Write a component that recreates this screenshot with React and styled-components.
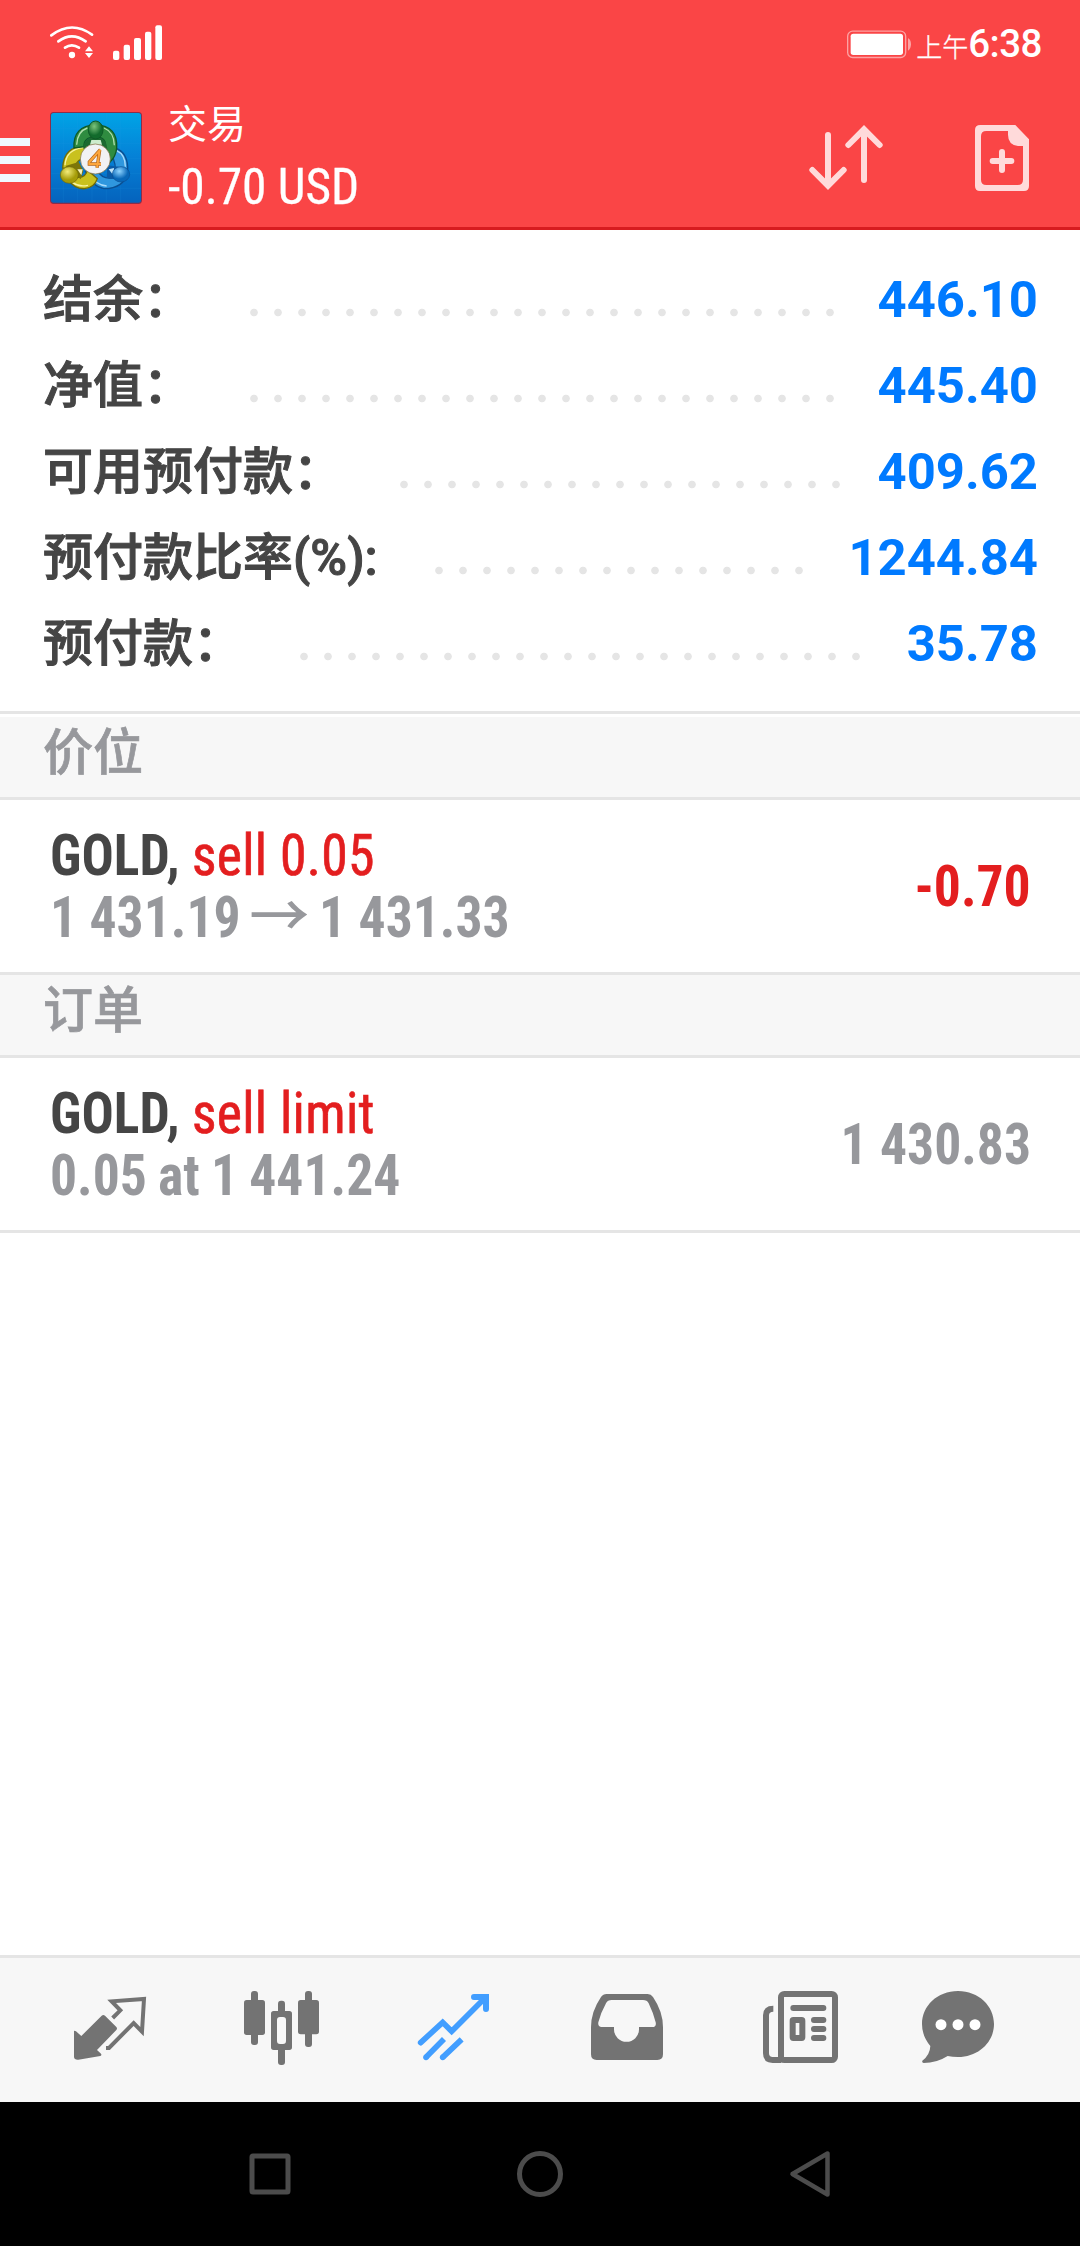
import React from 'react';
import styled, { createGlobalStyle } from 'styled-components';

const GlobalStyle = createGlobalStyle`
  * {
    box-sizing: border-box;
  }
  body {
    margin: 0;
    background: #fff;
    font-family: Roboto, 'Noto Sans CJK SC', sans-serif;
  }
  svg {
    display: block;
  }
`

const Screen = styled.div`
  display: flex;
  flex-direction: column;
  width: 1080px;
  height: 2246px;
`

const StatusBar = styled.div`
  display: flex;
  justify-content: space-between;
  height: 80px;
  padding: 0 38px 0 50px;
  background: #fa4546;
  color: #fff;
`
const StatusGroup = styled.div`
  display: flex;
`
const ClockPrefix = styled.span`
  margin-left: 5px;
  padding-top: 25px;
  font-size: 26px;
  font-weight: 300;
  line-height: 46px;
  -webkit-text-stroke: 0.3px #fff;
`
const Clock = styled.span`
  padding-top: 20px;
  font-size: 38.5px;
  font-weight: 500;
  letter-spacing: -0.5px;
  line-height: 48px;
`

const Header = styled.header`
  display: flex;
  height: 150px;
  background: #fa4546;
  border-bottom: 3px solid #d71b1f;
  color: #fff;
`
const MenuButton = styled.div`
  display: flex;
  flex-direction: column;
  gap: 10px;
  width: 30px;
  margin: 58px 20px 0 0;
`
const MenuLine = styled.span`
  height: 8px;
  background: #f0f8ff;
`
const AppLogo = styled.div`
  width: 92px;
  height: 92px;
  margin: 32px 26px 0 0;
`
const HeaderText = styled.div`
  flex: 1;
  padding-top: 20px;
`
const Title = styled.div`
  font-size: 39px;
  line-height: 51px;
`
const Profit = styled.div`
  font-family: 'Roboto Condensed', Roboto, sans-serif;
  font-size: 50.5px;
  line-height: 71px;
  transform: scaleX(0.978);
  transform-origin: left;
  -webkit-text-stroke: 0.3px #fff;
`
const Actions = styled.div`
  display: flex;
  gap: 92px;
  padding: 45px 51px 0 0;
`

const Summary = styled.section`
  padding: 27px 42px 24px 43px;
  border-bottom: 3px solid #e5e5e5;
`
const SummaryRow = styled.div`
  display: flex;
  height: 86px;
  line-height: 86px;
`
const Label = styled.span`
  font-size: 50px;
  font-weight: 500;
  color: #454545;
  -webkit-text-stroke: 1px #454545;
`
const Leader = styled.span`
  width: ${(p) => p.$dots * 24}px;
  margin-left: 49px;
  background: radial-gradient(circle at 12px 55.5px, #e5e5e5 3.4px, transparent 4.2px) repeat-x 0 0 / 24px 86px;
`
const Amount = styled.span`
  margin-left: auto;
  color: #007aff;
  font-size: 50.8px;
  font-weight: 700;
`

const SectionHead = styled.div`
  height: 83px;
  margin-top: ${(p) => (p.$spaced ? '3px' : 0)};
  padding-left: 43px;
  background: #f7f7f7;
  border-bottom: 3px solid #e5e5e5;
  color: #97989c;
  font-size: 50px;
  font-weight: 500;
  line-height: 73px;
  -webkit-text-stroke: 0.7px #97989c;
`
const Order = styled.div`
  display: flex;
  justify-content: space-between;
  height: 175px;
  padding: 24px 49px 0 50px;
  border-bottom: 3px solid #e5e5e5;
  color: #97989c;
  font-family: 'Roboto Condensed', Roboto, 'Noto Sans CJK SC', sans-serif;
  font-size: 58px;
  font-weight: 700;
  line-height: 62px;
  white-space: nowrap;
`
const OrderInfo = styled.div`
  transform: scaleX(0.925);
  transform-origin: left;
`
const Symbol = styled.span`
  color: #454545;
`
const Action = styled.span`
  color: #e31e1f;
  font-weight: 400;
  letter-spacing: 0.3px;
  -webkit-text-stroke: 0.7px #e31e1f;
`
const Price = styled.div`
  word-spacing: ${(p) => (p.$tight ? '-1.3px' : 0)};
`
const Arrow = styled.span`
  display: inline-block;
  font-weight: 500;
  transform: scaleX(1.12);
`
const OrderValue = styled.div`
  line-height: 124px;
  transform: scaleX(0.925);
  transform-origin: right;
  color: ${(p) => (p.$loss ? '#e31e1f' : '#97989c')};
`
const Content = styled.main`
  flex: 1;
`

const TabBar = styled.nav`
  display: grid;
  grid-template-columns: 171px 173px 173px 173px 158px 80px;
  align-items: center;
  height: 147px;
  padding-left: 70px;
  background: #f7f7f7;
  border-top: 3px solid #e5e5e5;
`
const Tab = styled.div`
  color: ${(p) => (p.$active ? '#429eff' : '#737373')};
`
const SystemBar = styled.div`
  display: flex;
  justify-content: space-between;
  align-items: center;
  height: 144px;
  padding: 0 240px;
  background: #000;
`

const summary = [
  { label: '结余：', value: '446.10', dots: 25 },
  { label: '净值：', value: '445.40', dots: 25 },
  { label: '可用预付款：', value: '409.62', dots: 19 },
  { label: '预付款比率(%):', value: '1244.84', dots: 16 },
  { label: '预付款：', value: '35.78', dots: 24 },
]

function WifiIcon() {
  return (
    <svg width="48" height="80" viewBox="150 0 144 240" fill="none" stroke="#fff" strokeWidth="8" strokeLinecap="round">
      <path d="M154 106Q215 60 276 104" />
      <path d="M175 124Q215 94 257 124" />
      <path d="M195 143Q215 129 237 143" />
      <circle cx="216" cy="165" r="9.5" fill="#fff" stroke="none" />
      <path d="M267 139l12 15h-24zM267 174l12-15h-24z" fill="#fff" stroke="none" />
    </svg>
  )
}

function SignalIcon() {
  return (
    <svg width="66" height="80" viewBox="294 0 198 240" fill="#fff">
      <rect x="339" y="152" width="19" height="28" rx="6" />
      <rect x="371" y="134" width="19" height="46" rx="6" />
      <rect x="402" y="114" width="21" height="66" rx="6" />
      <rect x="435" y="95" width="19" height="85" rx="6" />
      <rect x="466" y="76" width="20" height="104" rx="6" />
    </svg>
  )
}

function BatteryIcon() {
  return (
    <svg width="64" height="80" viewBox="201 0 192 240">
      <rect x="203" y="93.5" width="174" height="79" rx="15" fill="none" stroke="#fda2a3" strokeWidth="4" />
      <rect x="212" y="101" width="157" height="64" rx="8" fill="#fff" />
      <path d="M384 114q9 6 9 19t-9 19z" fill="#fda2a3" />
    </svg>
  )
}

function LogoIcon() {
  return (
    <svg width="92" height="92" viewBox="150 336 276 276">
      <defs>
        <linearGradient id="sky" x1="0" y1="0" x2="0" y2="1">
          <stop offset="0" stopColor="#00a4e6" />
          <stop offset="0.5" stopColor="#0580d6" />
          <stop offset="1" stopColor="#0563bd" />
        </linearGradient>
        <radialGradient id="greenHead" cx="0.4" cy="0.3">
          <stop offset="0" stopColor="#7cc47c" />
          <stop offset="1" stopColor="#126b2c" />
        </radialGradient>
        <radialGradient id="yellowHead" cx="0.4" cy="0.3">
          <stop offset="0" stopColor="#f3ec7a" />
          <stop offset="1" stopColor="#a59c08" />
        </radialGradient>
        <radialGradient id="blueHead" cx="0.4" cy="0.3">
          <stop offset="0" stopColor="#8fd4ff" />
          <stop offset="1" stopColor="#0867b8" />
        </radialGradient>
      </defs>
      <rect x="150" y="336" width="276" height="276" rx="11" fill="#8b2d4a" />
      <rect x="153" y="339" width="270" height="269" rx="8" fill="url(#sky)" />
      <path d="M190 339v269M233 339v269M276 339v269M319 339v269M362 339v269M153 385h270M153 430h270M153 475h270M153 520h270M153 565h270" stroke="#2b9fe6" strokeWidth="1.5" opacity="0.25" />

      <path d="M344 444Q386 456 383 516Q372 566 312 566Q276 560 256 514L292 512Q306 538 336 534Q354 512 340 476Z" fill="#2f97de" stroke="#0a4f92" strokeWidth="4" />
      <path d="M350 452Q376 464 376 500M270 524Q288 556 320 558" fill="none" stroke="#a9dcfb" strokeWidth="4" />
      <path d="M256 436Q190 440 188 504L224 506Q226 484 250 474ZM204 538Q224 568 254 566Q284 562 292 536L262 510Q258 532 236 532Z" fill="#c9c11e" stroke="#6f6a08" strokeWidth="4" />
      <path d="M250 443Q198 448 195 496M218 548Q238 562 264 556" fill="none" stroke="#f7f3a0" strokeWidth="4" />
      <path d="M222 444Q218 378 287 374Q354 378 350 444Q348 470 328 488L312 446Q326 414 287 410Q250 412 252 440Z" fill="#2f8c40" stroke="#0f5a26" strokeWidth="4" />
      <path d="M230 434Q232 394 262 384M312 384Q342 396 343 436" fill="none" stroke="#b0dfae" strokeWidth="4" />
      <path d="M250 446Q250 412 287 410Q322 412 322 452Z" fill="#1c6a30" />
      <path d="M274 420h28l4 14h-36z" fill="#cdeccd" />
      <path d="M196 498l40-12 14 26-8 26z" fill="#7d7608" />
      <path d="M322 496l34 4-12 38-24-4z" fill="#0a5aa6" />
      <path d="M232 508l16 0-4 18z" fill="#f7f3c0" />
      <path d="M326 508l16-4-2 22z" fill="#c0e4fa" />
      <ellipse cx="287" cy="390" rx="22" ry="27" fill="url(#greenHead)" stroke="#0f5a26" strokeWidth="3" />
      <ellipse cx="208" cy="525" rx="27" ry="25" fill="url(#yellowHead)" stroke="#6f6a08" strokeWidth="2" />
      <ellipse cx="363" cy="523" rx="26" ry="23" fill="url(#blueHead)" stroke="#0a4f92" strokeWidth="2" />
      <circle cx="286" cy="477" r="45" fill="#f2f2f4" stroke="#7d6a3a" strokeWidth="2" />
      <path d="M301 449L268 486V492H303M299 451L291 503" fill="none" stroke="#b5651a" strokeWidth="10" />
      <path d="M301 449L268 486V492H303M299 451L291 503" fill="none" stroke="#fda63c" strokeWidth="6" />
    </svg>
  )
}

function SortIcon() {
  return (
    <svg width="74" height="66" viewBox="87 375 222 198" fill="none" stroke="#ffdada" strokeWidth="18" strokeLinecap="round">
      <path d="M144 405v150M97 510l47 47 47-47" />
      <path d="M252 540V390M205 435l47-47 47 47" />
    </svg>
  )
}

function NewOrderIcon() {
  return (
    <svg width="54" height="66" viewBox="585 375 162 198" fill="none" stroke="#ffdada">
      <path d="M601 375H706L747 418V558Q747 573 732 573H600Q585 573 585 558V390Q585 375 601 375ZM619 393Q603 393 603 409V539Q603 555 619 555H713Q729 555 729 539V438H714Q684 434 684 404V393Z" fill="#ffdada" fillRule="evenodd" stroke="none" />
      <path d="M666 456v54M638 483h56" strokeWidth="18" strokeLinecap="round" />
    </svg>
  )
}

function QuotesIcon() {
  return (
    <svg width="80" height="80" viewBox="210 150 240 240" fill="currentColor">
      <path d="M222 273q2-2 6 1l16 14 61-61q5-4 10 0l34 34q4 5 0 9l-58 60 12 11q3 5-2 7l-66 11q-12 1-13-8z" />
      <path d="M338 234L361 211 335 184 432 177 426 275 401 249 327 324H318" fill="none" stroke="currentColor" strokeWidth="12" />
    </svg>
  )
}

function ChartsIcon() {
  return (
    <svg width="80" height="80" viewBox="723 150 240 240" fill="currentColor">
      <rect x="753" y="153" width="21" height="162" rx="9" />
      <rect x="732" y="180" width="63" height="105" rx="8" />
      <rect x="834" y="182" width="21" height="40" rx="9" />
      <rect x="834" y="320" width="21" height="55" rx="9" />
      <path d="M821 213h47q8 0 8 8v101q0 8-8 8h-47q-8 0-8-8V221q0-8 8-8zM840 231q-9 0-9 9v63q0 9 9 9h9q9 0 9-9v-63q0-9-9-9z" fillRule="evenodd" />
      <rect x="915" y="153" width="21" height="168" rx="9" />
      <rect x="894" y="180" width="63" height="103" rx="8" />
    </svg>
  )
}

function TradeIcon() {
  return (
    <svg width="80" height="80" viewBox="162 150 240 240" fill="none" stroke="currentColor" strokeWidth="17">
      <path d="M182 308L248 247 275 274 374 175" strokeLinecap="round" />
      <path d="M342 171h36v36" strokeLinecap="round" strokeWidth="18" />
      <path d="M363 169h22v22z" fill="currentColor" stroke="none" />
      <path d="M198 352L252 297M248 352L305 298" />
      <circle cx="198" cy="352" r="8.5" fill="currentColor" stroke="none" />
      <circle cx="248" cy="352" r="8.5" fill="currentColor" stroke="none" />
    </svg>
  )
}

function HistoryIcon() {
  return (
    <svg width="80" height="80" viewBox="681 150 240 240" fill="currentColor">
      <path d="M740 162H863Q873 162 879 171Q909 215 909 262V343Q909 360 892 360H710Q693 360 693 343V262Q693 215 723 171Q729 162 740 162ZM755 180Q743 180 738 190Q722 219 715 247Q713 261 725 261H762V268A37 37 0 0 0 837 268V261H877Q890 261 887 247Q880 219 866 190Q861 180 849 180Z" fillRule="evenodd" />
    </svg>
  )
}

function NewsIcon() {
  return (
    <svg width="80" height="80" viewBox="120 150 240 240" fill="none" stroke="currentColor" strokeWidth="18">
      <rect x="183" y="162" width="162" height="198" rx="10" />
      <path d="M160 206q-22 0-22 20v114q0 20 20 20h26" />
      <path d="M220 204h90M282 240h28M282 267h28M282 294h28" strokeLinecap="round" />
      <rect x="218" y="240" width="29" height="54" rx="2" />
    </svg>
  )
}

function ChatIcon() {
  return (
    <svg width="80" height="80" viewBox="594 150 240 240" fill="currentColor">
      <path d="M714 153C776 153 822 198 822 252S776 351 714 351Q697 351 683 348Q650 369 611 369Q605 367 607 362Q630 345 631 318Q606 288 606 252C606 198 652 153 714 153Z" />
      <g fill="#fff">
        <circle cx="663" cy="254" r="16.5" />
        <circle cx="714" cy="254" r="16.5" />
        <circle cx="765" cy="254" r="16.5" />
      </g>
    </svg>
  )
}

const tabs = [QuotesIcon, ChartsIcon, TradeIcon, HistoryIcon, NewsIcon, ChatIcon]

export default function App() {
  return (
    <Screen>
      <GlobalStyle />
      <StatusBar>
        <StatusGroup>
          <WifiIcon />
          <SignalIcon />
        </StatusGroup>
        <StatusGroup>
          <BatteryIcon />
          <ClockPrefix>上午</ClockPrefix>
          <Clock>6:38</Clock>
        </StatusGroup>
      </StatusBar>
      <Header>
        <MenuButton>
          <MenuLine />
          <MenuLine />
          <MenuLine />
        </MenuButton>
        <AppLogo>
          <LogoIcon />
        </AppLogo>
        <HeaderText>
          <Title>交易</Title>
          <Profit>-0.70 USD</Profit>
        </HeaderText>
        <Actions>
          <SortIcon />
          <NewOrderIcon />
        </Actions>
      </Header>
      <Content>
        <Summary>
          {summary.map((row) => (
            <SummaryRow key={row.label}>
              <Label>{row.label}</Label>
              <Leader $dots={row.dots} />
              <Amount>{row.value}</Amount>
            </SummaryRow>
          ))}
        </Summary>
        <SectionHead $spaced>价位</SectionHead>
        <Order>
          <OrderInfo>
            <div><Symbol>GOLD, </Symbol><Action>sell 0.05</Action></div>
            <Price>1 431.19 <Arrow>→</Arrow> 1 431.33</Price>
          </OrderInfo>
          <OrderValue $loss>-0.70</OrderValue>
        </Order>
        <SectionHead>订单</SectionHead>
        <Order>
          <OrderInfo>
            <div><Symbol>GOLD, </Symbol><Action>sell limit</Action></div>
            <Price $tight>0.05 at 1 441.24</Price>
          </OrderInfo>
          <OrderValue>1 430.83</OrderValue>
        </Order>
      </Content>
      <TabBar>
        {tabs.map((Icon, i) => (
          <Tab key={i} $active={Icon === TradeIcon}>
            <Icon />
          </Tab>
        ))}
      </TabBar>
      <SystemBar>
        <svg width="60" height="60" viewBox="0 0 60 60" fill="none" stroke="#4c4c4c" strokeWidth="5">
          <rect x="12" y="12" width="36" height="36" rx="1" />
        </svg>
        <svg width="60" height="60" viewBox="0 0 60 60" fill="none" stroke="#4c4c4c" strokeWidth="5">
          <circle cx="30" cy="30" r="20.5" />
        </svg>
        <svg width="60" height="60" viewBox="0 0 60 60" fill="none" stroke="#4c4c4c" strokeWidth="4.5" strokeLinejoin="round">
          <path d="M12.5 30L47.5 9.5V50.5Z" />
        </svg>
      </SystemBar>
    </Screen>
  )
}
